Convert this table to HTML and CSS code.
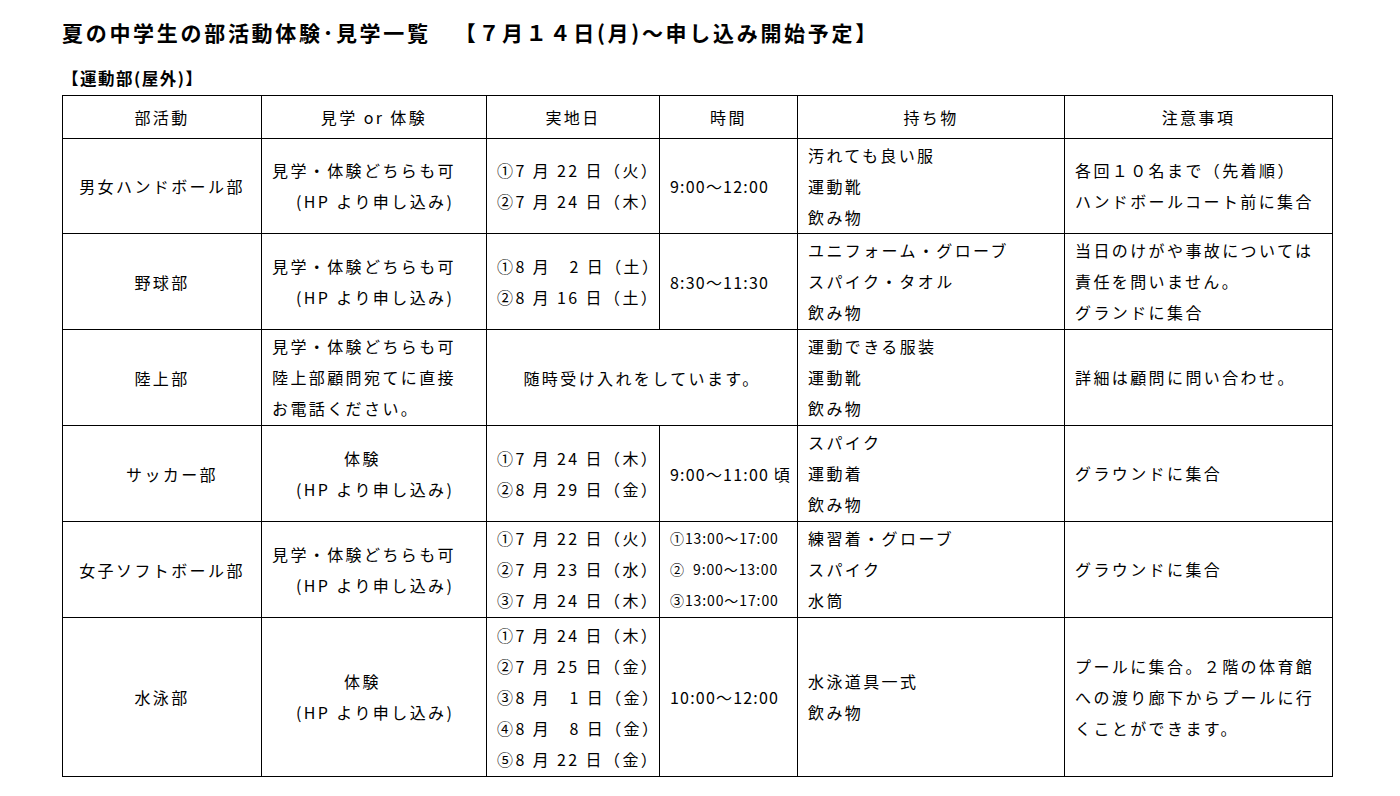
FILE: index.html
```html
<!DOCTYPE html>
<html lang="ja">
<head>
<meta charset="utf-8">
<title>夏の中学生の部活動体験・見学一覧</title>
<link rel="stylesheet" href="styles.css">
</head>
<body>
<div class="page">
  <h1 class="title">夏の中学生の部活動体験･見学一覧<span class="gap"></span>【７月１４日(月)～申し込み開始予定】</h1>
  <h2 class="sub">【運動部(屋外)】</h2>
  <table class="list">
    <colgroup>
      <col class="c1"><col class="c2"><col class="c3"><col class="c4"><col class="c5"><col class="c6">
    </colgroup>
    <thead>
      <tr class="head">
        <th>部活動</th><th>見学 or 体験</th><th>実地日</th><th>時間</th><th>持ち物</th><th>注意事項</th>
      </tr>
    </thead>
    <tbody>
      <tr class="r3 first">
        <td class="center">男女ハンドボール部</td>
        <td><div>見学・体験どちらも可</div><div class="indent">(HP より申し込み)</div></td>
        <td><div>①7 月 22 日（火）</div><div>②7 月 24 日（木）</div></td>
        <td class="num">9:00～12:00</td>
        <td><div>汚れても良い服</div><div>運動靴</div><div>飲み物</div></td>
        <td><div>各回１０名まで（先着順）</div><div>ハンドボールコート前に集合</div></td>
      </tr>
      <tr class="r3">
        <td class="center">野球部</td>
        <td><div>見学・体験どちらも可</div><div class="indent">(HP より申し込み)</div></td>
        <td><div>①8 月　2 日（土）</div><div>②8 月 16 日（土）</div></td>
        <td class="num">8:30～11:30</td>
        <td><div>ユニフォーム・グローブ</div><div>スパイク・タオル</div><div>飲み物</div></td>
        <td><div>当日のけがや事故については</div><div>責任を問いません。</div><div>グランドに集合</div></td>
      </tr>
      <tr class="r3">
        <td class="center">陸上部</td>
        <td><div>見学・体験どちらも可</div><div>陸上部顧問宛てに直接</div><div>お電話ください。</div></td>
        <td colspan="2" class="center">随時受け入れをしています。</td>
        <td><div>運動できる服装</div><div>運動靴</div><div>飲み物</div></td>
        <td><div>詳細は顧問に問い合わせ。</div></td>
      </tr>
      <tr class="r3">
        <td class="center shift">サッカー部</td>
        <td><div class="mid">体験</div><div class="indent">(HP より申し込み)</div></td>
        <td><div>①7 月 24 日（木）</div><div>②8 月 29 日（金）</div></td>
        <td class="num">9:00～11:00 頃</td>
        <td><div>スパイク</div><div>運動着</div><div>飲み物</div></td>
        <td><div>グラウンドに集合</div></td>
      </tr>
      <tr class="r3">
        <td class="center">女子ソフトボール部</td>
        <td><div>見学・体験どちらも可</div><div class="indent">(HP より申し込み)</div></td>
        <td><div>①7 月 22 日（火）</div><div>②7 月 23 日（水）</div><div>③7 月 24 日（木）</div></td>
        <td class="num small"><div>①13:00～17:00</div><div>②&nbsp;&nbsp;9:00～13:00</div><div>③13:00～17:00</div></td>
        <td><div>練習着・グローブ</div><div>スパイク</div><div>水筒</div></td>
        <td><div>グラウンドに集合</div></td>
      </tr>
      <tr class="r5">
        <td class="center">水泳部</td>
        <td><div class="mid">体験</div><div class="indent">(HP より申し込み)</div></td>
        <td><div>①7 月 24 日（木）</div><div>②7 月 25 日（金）</div><div>③8 月　1 日（金）</div><div>④8 月　8 日（金）</div><div>⑤8 月 22 日（金）</div></td>
        <td class="num">10:00～12:00</td>
        <td><div>水泳道具一式</div><div>飲み物</div></td>
        <td><div>プールに集合。２階の体育館</div><div>への渡り廊下からプールに行</div><div>くことができます。</div></td>
      </tr>
    </tbody>
  </table>
</div>
</body>
</html>
```
FILE: styles.css
```css
html, body {
  margin: 0;
  padding: 0;
  background: #fff;
}
body {
  font-family: "Noto Sans CJK JP", "Noto Sans", sans-serif;
  color: #000;
}
.page {
  padding: 18px 0 0 62px;
}
.title {
  margin: 0;
  font-size: 21px;
  font-weight: bold;
  line-height: 28px;
  letter-spacing: 2.7px;
  white-space: nowrap;
}
.title .gap {
  display: inline-block;
  width: 24px;
}
.sub {
  margin: 22px 0 0 0;
  font-size: 16.5px;
  font-weight: bold;
  line-height: 20px;
  letter-spacing: 1.5px;
}
.list {
  margin-top: 7px;
  border-collapse: collapse;
  table-layout: fixed;
  width: 1271px;
  font-size: 16px;
  letter-spacing: 2.4px;
}
.c1 { width: 199px; }
.c2 { width: 225px; }
.c3 { width: 173px; }
.c4 { width: 138px; }
.c5 { width: 267px; }
.c6 { width: 268px; }
.list th, .list td {
  border: 1px solid #000;
  padding: 0 10px;
  vertical-align: middle;
  text-align: left;
  white-space: nowrap;
  overflow: hidden;
  font-weight: normal;
}
.list th {
  text-align: center;
  height: 42px;
}
.list td div {
  line-height: 31px;
}
.r3 td { height: 95px; }
.r3.first td { height: 94px; }
.r5 td { height: 158px; }
.list td.center { text-align: center; }
.list td.shift { padding-left: 30px; }
.indent { padding-left: 24px; }
.mid { padding-left: 72px; }
.num {
  letter-spacing: 1.2px;
}
.small {
  font-size: 14px;
  letter-spacing: 0.9px;
}
```
